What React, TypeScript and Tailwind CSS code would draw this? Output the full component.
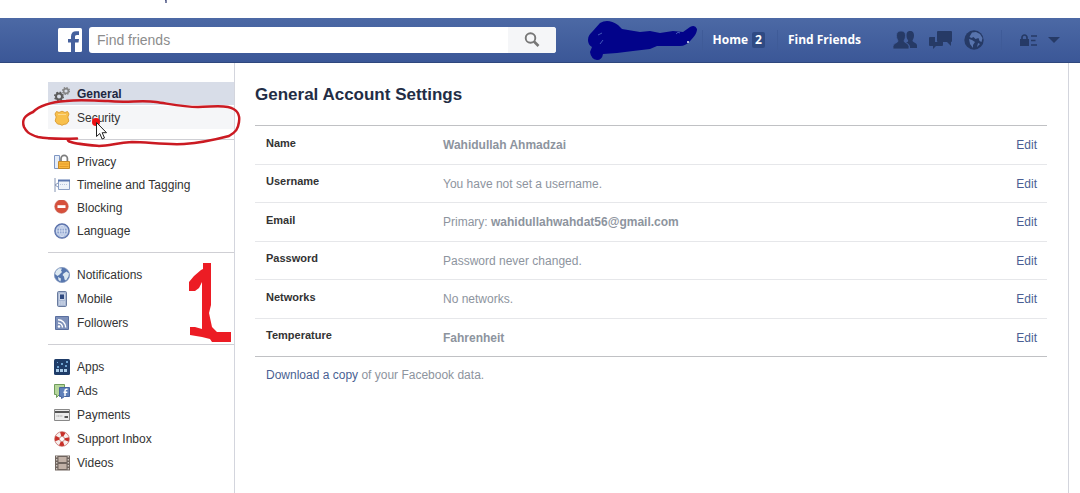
import type { ReactNode } from 'react';

type NavItem = { label: string; icon: ReactNode; state?: 'active' | 'hover' };

const Icon = ({ children }: { children: ReactNode }) => (
  <svg viewBox="0 0 16 16" className="h-4 w-4 shrink-0" aria-hidden="true">
    {children}
  </svg>
);

// ---- Sidebar icons ------------------------------------------------------
const gears = (
  <Icon>
    <circle cx="5" cy="10.5" r="3" fill="none" stroke="#5b5b5b" strokeWidth="2" />
    <circle cx="5" cy="10.5" r="4.3" fill="none" stroke="#5b5b5b" strokeWidth="1.4" strokeDasharray="1.7 1.7" />
    <circle cx="12" cy="5" r="2.4" fill="none" stroke="#858585" strokeWidth="1.6" />
    <circle cx="12" cy="5" r="3.5" fill="none" stroke="#858585" strokeWidth="1.2" strokeDasharray="1.4 1.35" />
  </Icon>
);

const shield = (
  <Icon>
    <path
      d="M2.5 1.5L5 2.5 8 1.2l3 1.3 2.5-1L15 4l-1.2 3 1 4-2.3 3-2.5.3L8 15.3 6 14.3 3.500 14 1.200 11l1-4L1 4z"
      fill="#f8c04c"
      stroke="#dda038"
    />
    <path d="M4 4.500h8" stroke="#fcd98a" />
  </Icon>
);

const padlock = (
  <Icon>
    <path d="M.5 1.500h5v13h-5z" fill="#e4ecf8" stroke="#7f96c2" />
    <path d="M7 8V4.500a3.200 3.200 0 0 1 6.400 0V8" fill="none" stroke="#7d7d7d" strokeWidth="1.700" />
    <path d="M4.500 7.500h11v7h-11z" fill="#f9b73e" stroke="#c58a2a" />
    <path d="M5.500 10h9M5.500 12.500h9" stroke="#e59c2b" />
  </Icon>
);

const timeline = (
  <Icon>
    <path d="M1 1v14M1 8l3-2M1 8l3 2" fill="none" stroke="#8494b4" />
    <path d="M4.500 3.500h11v9h-11z" fill="#eef3fa" stroke="#8ba0c6" />
    <path d="M4 3.500h12" stroke="#5a76ae" strokeWidth="2" />
    <path d="M6 7.500h8" stroke="#b8c6de" strokeDasharray="1 1" />
  </Icon>
);

const block = (
  <Icon>
    <circle cx="7.500" cy="6.500" r="6.800" fill="#d6503c" stroke="#c4685b" strokeWidth=".6" />
    <path d="M3.500 5.200h8v2.800h-8z" fill="#fff" />
  </Icon>
);

const language = (
  <Icon>
    <circle cx="8" cy="8" r="7.200" fill="#8aa0cd" stroke="#586fa8" strokeWidth="1.200" />
    <g fill="none" stroke="#dbe4f4" strokeWidth=".9">
      <circle cx="8" cy="8" r="5.500" />
      <ellipse cx="8" cy="8" rx="2.500" ry="5.500" />
      <path d="M8 2.500v11M2.500 8h11M3.500 5h9M3.500 11h9" />
    </g>
  </Icon>
);

const globe = (
  <Icon>
    <circle cx="8" cy="8" r="7.600" fill="#5676ae" stroke="#8096bd" strokeWidth=".8" />
    <path d="M2 4l3-2.700 3 .2-1 2 1 1.500L5 8 3.500 9 1 7zM9.500 6.500l3-2 2.500 2-.5 3-2.500 4-1.500-1-.5-3-1.500-1.500zM4 10l3 1.500-.5 3L4.500 13z" fill="#dce8f0" />
  </Icon>
);

const mobile = (
  <Icon>
    <rect x="3.500" y=".5" width="9" height="15" rx="1.200" fill="#a9b8d3" stroke="#687a9e" />
    <path d="M5.500 3h5v5.500h-5z" fill="#2f4a80" stroke="#e5ebf5" strokeWidth=".8" />
    <path d="M5 11h6M5 13h6" stroke="#e4eaf4" strokeDasharray="1.500 .7" />
  </Icon>
);

const feed = (
  <Icon>
    <path d="M1.500 1.500h13v13h-13z" fill="#7d90ba" stroke="#5a6f9f" />
    <circle cx="5" cy="11.500" r="1.200" fill="#fff" />
    <path d="M4 8a4.500 4.500 0 0 1 4.500 4.500M4 4.800a7.700 7.700 0 0 1 7.700 7.700" fill="none" stroke="#fff" strokeWidth="1.400" />
  </Icon>
);

const apps = (
  <Icon>
    <rect width="16" height="16" rx="1.500" fill="#1e3c68" />
    <path d="M2 10h3v3H2zM6 10h3v3H6zM10 10h3v3h-3z" fill="#a9cbe8" />
    <path d="M3 7h2v2H3zM7 4h2v2H7zM11 6h2v2h-2zM12 2h2v2h-2zM3 3h1v1H3z" fill="#6da3d2" />
  </Icon>
);

const ads = (
  <Icon>
    <path d="M.5 1.500h10v10h-5l-3 3v-3h-2z" fill="#b5d69b" stroke="#6f9b5c" />
    <path d="M5.500 4.500h10v9h-5l-3 2v-2h-2z" fill="#5f80b9" stroke="#46659f" />
    <path d="M13.500 6.200h-1c-1 0-1.500.6-1.500 1.600V13M9.500 9.300h3.800" fill="none" stroke="#fff" strokeWidth="1.500" />
  </Icon>
);

const card = (
  <Icon>
    <path d="M.5 2.500h15v11H.5z" fill="#ebebeb" stroke="#888" />
    <path d="M1 5h14" stroke="#555" strokeWidth="2" />
    <path d="M2.500 9h6" stroke="#999" strokeDasharray="1 .6" />
    <path d="M10.500 10h3.500" stroke="#555" strokeWidth="2" />
  </Icon>
);

const lifebuoy = (
  <Icon>
    <circle cx="8" cy="8" r="5" fill="none" stroke="#f7efed" strokeWidth="4.500" />
    <circle cx="8" cy="8" r="5" fill="none" stroke="#c92f28" strokeWidth="4.500" strokeDasharray="4 3.854" strokeDashoffset="2" />
    <circle cx="8" cy="8" r="7.300" fill="none" stroke="#c0605a" strokeWidth=".7" />
    <circle cx="8" cy="8" r="2.600" fill="#fff" stroke="#b85a52" strokeWidth=".7" />
  </Icon>
);

const film = (
  <Icon>
    <path d="M1 .5h15v15H1z" fill="#70655f" />
    <path d="M4.500 2h8v5h-8zM4.500 9h8v5h-8z" fill="#c2b2a8" />
    <path d="M2.700 1v14M14.300 1v14" stroke="#d8d0ca" strokeWidth="1.200" strokeDasharray="1.500 1.500" />
  </Icon>
);

const navGroups: { id: string; className: string; items: NavItem[] }[] = [
  {
    id: 'account',
    className: 'gap-px pb-2.5',
    items: [
      { label: 'General', icon: gears, state: 'active' },
      { label: 'Security', icon: shield, state: 'hover' },
    ],
  },
  {
    id: 'privacy',
    className: 'border-t border-[#cfcfd4] py-2.5',
    items: [
      { label: 'Privacy', icon: padlock },
      { label: 'Timeline and Tagging', icon: timeline },
      { label: 'Blocking', icon: block },
      { label: 'Language', icon: language },
    ],
  },
  {
    id: 'channels',
    className: 'gap-px border-t border-[#cfcfd4] py-2.5',
    items: [
      { label: 'Notifications', icon: globe },
      { label: 'Mobile', icon: mobile },
      { label: 'Followers', icon: feed },
    ],
  },
  {
    id: 'more',
    className: 'gap-px border-t border-[#cfcfd4] py-2.5',
    items: [
      { label: 'Apps', icon: apps },
      { label: 'Ads', icon: ads },
      { label: 'Payments', icon: card },
      { label: 'Support Inbox', icon: lifebuoy },
      { label: 'Videos', icon: film },
    ],
  },
];

const settings: { label: string; value: ReactNode }[] = [
  { label: 'Name', value: <strong>Wahidullah Ahmadzai</strong> },
  { label: 'Username', value: 'You have not set a username.' },
  { label: 'Email', value: <>Primary: <strong>wahidullahwahdat56@gmail.com</strong></> },
  { label: 'Password', value: 'Password never changed.' },
  { label: 'Networks', value: 'No networks.' },
  { label: 'Temperature', value: <strong>Fahrenheit</strong> },
];

const rowState = {
  active: 'bg-[#d8dde8] font-bold text-[#1d2740]',
  hover: 'bg-[#f5f6f8] text-[#333]',
  plain: 'text-[#333]',
};

const Divider = () => <span className="h-5 w-px bg-[#3f5b98]" />;

const TopBar = () => (
  <header className="flex h-[45px] items-center border-b border-[#2f477d] bg-linear-to-b from-[#4c69a5] to-[#3b5797] pr-5 pl-[58px] font-['Open_Sans',sans-serif] text-xs font-bold text-white">
    <a href="#home" aria-label="Facebook" className="mr-[7px]">
      <svg viewBox="0 0 24 24" className="h-6 w-6">
        <rect width="24" height="24" rx="1.500" fill="#fff" />
        <path d="M13 24v-9.500h-3V11h3V8.500C13 5 15 3.300 18 3.300h3V7h-2c-1.600 0-2 .8-2 2v2h4l-.5 3.500H17V24z" fill="#46619d" />
      </svg>
    </a>
    <form className="flex h-[26px] min-w-0 flex-1 overflow-hidden rounded-[3px] bg-white" role="search">
      <input
        type="text"
        aria-label="Find friends"
        placeholder="Find friends"
        className="min-w-0 flex-1 px-2 font-['Liberation_Sans',Arial,sans-serif] text-sm font-normal text-[#333] outline-none placeholder:text-[#8c8c8c]"
      />
      <button type="button" aria-label="Search" className="flex w-12 items-center justify-center bg-[#f5f6f8]">
        <svg viewBox="0 0 16 16" className="h-4 w-4" fill="none" stroke="#777">
          <circle cx="6.500" cy="6" r="4.800" strokeWidth="1.900" />
          <path d="M10 9.500l4.500 4.500" strokeWidth="2.600" />
        </svg>
      </button>
    </form>

    <a href="#profile" aria-label="Profile" className="ml-8 shrink-0">
      <svg viewBox="588 18 110 44" className="h-11 w-[110px]">
        <path
          d="M588 40C588 36 590 34 592 32L600 23Q608 18 618 25L622 29 640 32 650 31 660 33 673 31 683 32 690 27Q695 24 697 29C697 33 694 37 691 40Q686 46 680 46L657 46 650 49 633 51 617 53 603 54Q602 60 597 60 591 59 590 52L592 47Q588 45 588 40z"
          fill="#02038a"
        />
        <path d="M676 34q2-3 4-1M598 35l4-2M600 44l3-4" stroke="#4358b8" fill="none" />
        <path d="M688 41v2" stroke="#e7ebf5" strokeWidth="1.500" />
      </svg>
    </a>
    <nav aria-label="Main" className="ml-1 flex shrink-0 items-center">
      <Divider />
      <a href="#home" className="mr-3 ml-2.5 flex items-center gap-1">
        Home
        <span className="rounded-xs bg-[#2f4a83] px-[3px] leading-4">2</span>
      </a>
      <Divider />
      <a href="#friends" className="ml-2.5">Find Friends</a>
    </nav>

    <div className="ml-8 flex shrink-0 items-center text-[#263a66]">
      <button type="button" aria-label="Friend requests" className="mr-3">
        <svg viewBox="0 0 24 20" className="h-5 w-6" fill="currentColor">
          <path d="M17 1c3 0 4 2 4 4.500S20 9 19.500 10.500c0 2 4.500 2 4.500 5V18h-7c0-3-1-4-4-5.500 2-.5 2.500-1 2-2.500-1-1-1.500-2-1.500-4.500C13.500 2 15 1 17 1z" />
          <path d="M8 1c3 0 4.500 1.700 4.500 4.500S11.500 9.500 11 11c0 2 5 2 5 5.500V19H0v-2.500C0 13 5 13 5 11 4.500 9.500 3.500 8.500 3.500 5.500S5 1 8 1z" stroke="#445f9d" strokeWidth=".8" />
        </svg>
      </button>
      <button type="button" aria-label="Messages" className="mr-3">
        <svg viewBox="0 0 23 20" className="h-5 w-[23px]" fill="currentColor">
          <path d="M1 7h5v5h8v3q0 1-1 1H7l-3 3v-3H1q-1 0-1-1V8q0-1 1-1z" />
          <path d="M9 1h13q1 0 1 1v9q0 1-1 1v4l-4-4H9q-1 0-1-1V2q0-1 1-1z" />
        </svg>
      </button>
      <button type="button" aria-label="Notifications">
        <svg viewBox="0 0 20 20" className="h-5 w-5">
          <circle cx="10" cy="10" r="9.700" fill="currentColor" />
          <path d="M8 2.500l4-.5 4 2 2.500 4-1 4-2-1-1-3-3 1-2-2-2 1-2-1 1-2zM5 9l3 1 3 2-2 3v3L6 14zM14 13l2 1-3 3z" fill="#5874ad" />
        </svg>
      </button>
      <span className="mr-[18px] ml-[17px] flex"><Divider /></span>
      <button type="button" aria-label="Privacy shortcuts" className="mr-[11px]">
        <svg viewBox="0 0 17 12" className="h-3 w-[17px]">
          <path d="M0 5h9v7H0z" fill="currentColor" />
          <path d="M2 5.500V3.500a2.500 2.500 0 0 1 5 0v2" fill="none" stroke="currentColor" strokeWidth="1.700" />
          <path d="M11 2h6M11 6.500h4.500M11 11h6" stroke="currentColor" strokeWidth="1.700" />
        </svg>
      </button>
      <button type="button" aria-label="Account menu">
        <svg viewBox="0 0 12 6" className="h-1.5 w-3" fill="currentColor">
          <path d="M0 0h12L6 6z" />
        </svg>
      </button>
    </div>
  </header>
);

const Sidebar = () => (
  <nav aria-label="Settings" className="w-[186px] shrink-0 pt-[19px]">
    {navGroups.map((g) => (
      <ul key={g.id} className={`flex flex-col ${g.className}`}>
        {g.items.map((item) => (
          <li key={item.label}>
            <a href="#settings" className={`flex h-[23px] items-center gap-[7px] pl-1.5 ${rowState[item.state ?? 'plain']}`}>
              {item.icon}
              {item.label}
            </a>
          </li>
        ))}
      </ul>
    ))}
  </nav>
);

// Hand-drawn marks over the page: circled menu entry, step number, pointer
const Annotations = () => (
  <svg viewBox="0 0 260 350" className="pointer-events-none absolute top-0 left-0 h-[350px] w-[260px]" aria-hidden="true">
    <path d="M165 0h1v3" fill="none" stroke="#25306a" strokeWidth="1.200" />
    <path
      d="M77 138.500C62 139 48 139 38 137 28 134 26 131 24 127 21 119 26 115 33 112 40 105 52 102 66 101 82 99 94 101 108 101 126 103 142 100 156 102 170 104 184 107 198 107 210 107 218 105 228 107 238 109 240 116 239 122 238 129 236 132 229 136 214 140 198 143 184 144 164 145 148 142 132 142 116 143 110 146 99 146 88 145 76 144 71 142Q67 141 68 139"
      fill="none"
      stroke="#cb1a22"
      strokeWidth="2.500"
      strokeLinecap="round"
      strokeLinejoin="round"
    />
    <path d="M203 263h8v42l-2 8 3 14 5 5h14v10h-19l-2-3-8-2-12-2v-8h5l7 2V282l-3 6-4 3h-6v-9l5-6 7-6 2-1z" fill="#ec1c24" />
    <circle cx="96" cy="122" r="4" fill="#ec1014" />
    <path d="M96.500 122.500v14l3.300-3 2.300 5.500 2.400-1-2.300-5.300h4.300z" fill="#fff" stroke="#222" />
  </svg>
);

const SettingsPanel = () => (
  <main className="mr-[11px] flex-1 border-x border-[#d3d5dd] pr-[21px] pl-5">
    <h1 className="pt-5 pb-[18px] text-[17px] leading-6 font-bold text-[#232d45]">General Account Settings</h1>
    <table className="w-full border-collapse border-y border-[#c0c1c4] text-left">
      <tbody>
        {settings.map((s) => (
          <tr key={s.label} className="h-[38px] border-b border-[#e6e7ea] odd:h-[39px] last:border-[#c0c1c4]">
            <th scope="row" className="w-[188px] pb-1 pl-[11px] text-[11px] text-[#333]">{s.label}</th>
            <td className="text-[#8d949e]">{s.value}</td>
            <td className="pr-2.5 text-right">
              <a href="#edit" aria-label={`Edit ${s.label}`} className="text-[#4a5f93]">Edit</a>
            </td>
          </tr>
        ))}
      </tbody>
    </table>
    <p className="pt-2.5 pl-[11px] text-[#8d949e]">
      <a href="#download" className="text-[#4a5f93]">Download a copy</a> of your Facebook data.
    </p>
  </main>
);

const App = () => (
  <div className="relative flex min-h-screen flex-col bg-white pt-[18px] font-['Liberation_Sans',Arial,sans-serif] text-xs">
    <TopBar />
    <div className="flex flex-1 pl-12">
      <Sidebar />
      <SettingsPanel />
    </div>
    <Annotations />
  </div>
);

export default App;
